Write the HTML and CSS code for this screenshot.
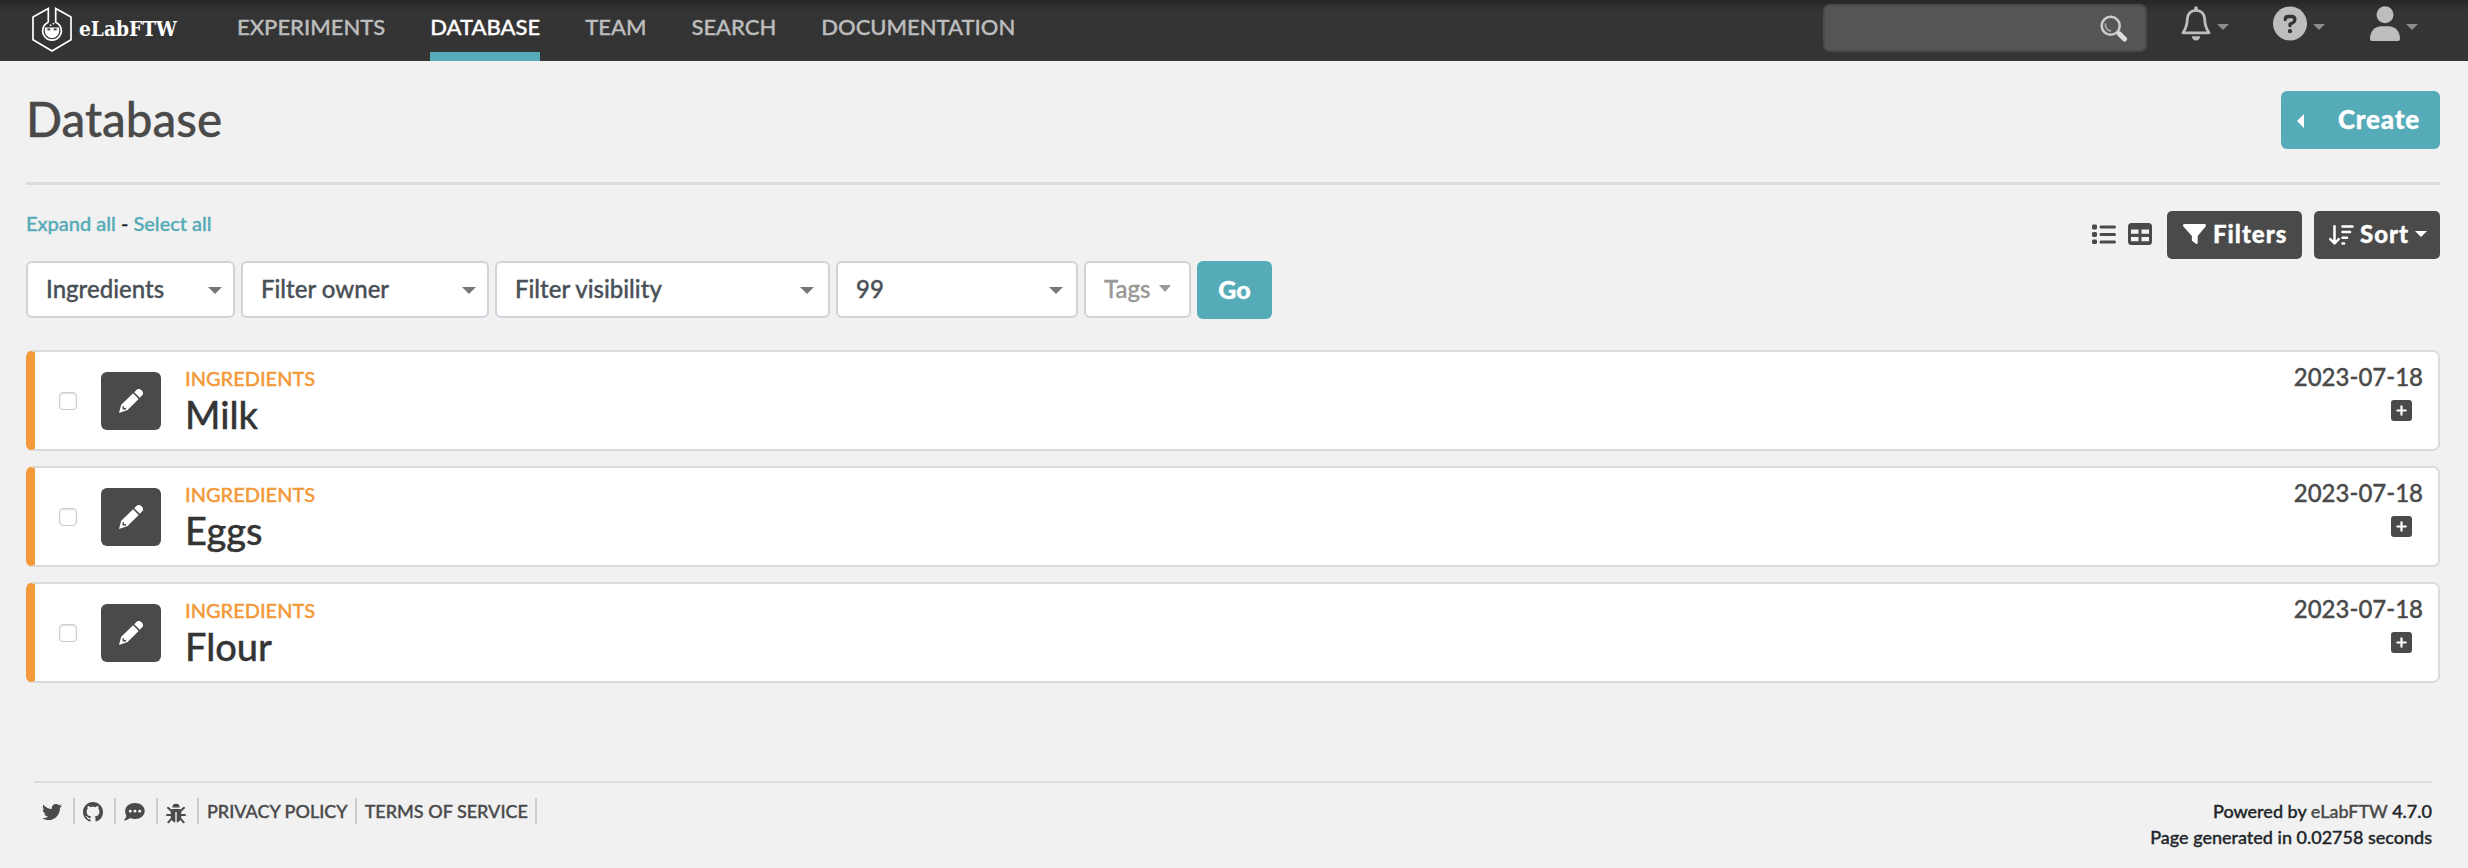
FILE: index.html
```html
<!DOCTYPE html>
<html lang="en">
<head>
<meta charset="utf-8">
<title>Database - eLabFTW</title>
<link rel="stylesheet" href="styles.css">
</head>
<body>
<svg class="defs" aria-hidden="true">
  <symbol id="pencil" viewBox="0 0 24 24">
    <path fill="#fff" d="M15.200 3.200 17.400 1a3.400 3.400 0 0 1 4.800 0l.8.8a3.400 3.400 0 0 1 0 4.800L20.800 8.800ZM14.100 4.300 19.700 9.900 8.600 21 0 24l2.200-8.200Z"/>
    <path fill="none" stroke="#4a4a4a" stroke-width="1.500" d="M4.300 17.300v2.500h2.800"/>
  </symbol>
  <symbol id="plus" viewBox="0 0 21 21">
    <rect width="21" height="21" rx="3" fill="#4a4a4a"/>
    <path stroke="#fff" stroke-width="2.200" stroke-linecap="round" d="M10.500 6.300v8.400M6.300 10.500h8.400"/>
  </symbol>
</svg>
<header class="navbar">
  <a class="brand">
    <svg class="logo" width="40" height="46" viewBox="0 0 40 46" fill="none">
      <path stroke="#fff" stroke-width="1.700" d="M16.300 16.200V2.400L1 11v22.800L20 45l19-11.200V11L23.700 2.400v13.800a9.300 9.300 0 1 1-7.400 0"/>
      <path fill="#fff" d="M12.800 21.500h14.400v3.500a7.200 7.200 0 0 1-14.400 0Z"/>
      <circle cx="18.600" cy="19.200" r=".9" fill="#fff"/><circle cx="21.400" cy="17.600" r=".9" fill="#fff"/>
      <path fill="#333" d="M15.300 22.500h3v1.700h-3zM21.700 22.500h3v1.700h-3z"/>
    </svg>
    <svg class="wordmark" width="100" height="30" viewBox="0 0 100 30"><text x="0" y="22" textLength="98" lengthAdjust="spacingAndGlyphs">eLabFTW</text></svg>
  </a>
  <nav class="menu">
    <a>EXPERIMENTS</a><a class="active">DATABASE</a><a>TEAM</a><a>SEARCH</a><a>DOCUMENTATION</a>
  </nav>
  <div class="search">
    <svg width="28" height="28" viewBox="0 0 28 28" fill="none"><circle cx="10.700" cy="10.700" r="9" stroke="#ccc" stroke-width="2.600"/><path stroke="#aaa" stroke-width="1.800" d="M5.500 8.500c-.8 4 1.500 7 5.500 7.500"/><path stroke="#ddd" stroke-width="5" stroke-linecap="round" d="m19.500 19 5 5"/></svg>
  </div>
  <div class="tools">
    <a class="tool bell"><svg width="30" height="35" viewBox="0 0 30 35"><path fill="none" stroke="#bdbdbd" stroke-width="2.800" stroke-linejoin="round" d="M15 4.300c-5 0-8.700 3.700-8.700 8.900 0 6.500-1.700 9.500-4.300 13.600h26c-2.600-4.100-4.300-7.100-4.300-13.600 0-5.200-3.700-8.900-8.700-8.900Z"/><path stroke="#bdbdbd" stroke-width="3.600" stroke-linecap="round" d="M15 2v2"/><path fill="#bdbdbd" d="M10.800 30.300h8.400a4.200 4.200 0 0 1-8.400 0Z"/></svg><i class="caret"></i></a>
    <a class="tool help"><svg width="34" height="35" viewBox="0 0 34 34"><circle cx="17" cy="17" r="17" fill="#bdbdbd"/><path fill="none" stroke="#343434" stroke-width="3.300" stroke-linecap="round" stroke-linejoin="round" d="M12.300 13c0-2 1.200-3 3-3h3.200c2 0 3.400 1.300 3.400 3.100 0 1.500-.7 2.300-1.800 3L17 17.800v1.400"/><circle cx="17" cy="24.600" r="2.200" fill="#343434"/></svg><i class="caret"></i></a>
    <a class="tool user"><svg width="30" height="35" viewBox="0 0 30 35"><circle cx="15" cy="8.700" r="8.500" fill="#bdbdbd"/><path fill="#bdbdbd" d="M0 33c0-8 4.700-12.800 11.500-12.800h7c6.800 0 11.500 4.800 11.500 12.800 0 1.200-.8 2-2 2H2c-1.200 0-2-.8-2-2Z"/></svg><i class="caret"></i></a>
  </div>
</header>
<main>
  <div class="title-bar">
    <h1>Database</h1>
    <button class="create"><i class="left"></i><span>Create</span></button>
  </div>
  <div class="controls">
    <div>
      <p class="links"><a>Expand all</a> - <a>Select all</a></p>
      <div class="filters">
        <div class="select category">Ingredients<i class="caret"></i></div>
        <div class="select owner">Filter owner<i class="caret"></i></div>
        <div class="select visibility">Filter visibility<i class="caret"></i></div>
        <div class="select limit">99<i class="caret"></i></div>
        <div class="select tags">Tags<i class="caret"></i></div>
        <button class="go">Go</button>
      </div>
    </div>
    <div class="view">
      <svg width="24" height="20" viewBox="0 0 24 20"><path stroke="#4a4a4a" stroke-width="3" stroke-linecap="round" d="M9 3h13.500M9 10.500h13.500M9 18h13.500"/><path fill="#4a4a4a" d="M0 1.500 1 .5h3l1 1v3l-1 1H1l-1-1zM0 9l1-1h3l1 1v3l-1 1H1l-1-1zM0 16.500l1-1h3l1 1v2.500l-1 1H1l-1-1z"/></svg>
      <svg class="grid" width="24" height="22" viewBox="0 0 24 22"><rect width="24" height="22" rx="3.500" fill="#4a4a4a"/><path fill="#f1f1f1" d="M3 6.500h7.500v4.300H3zM13.500 6.500H21v4.300h-7.500zM3 14h7.500v4.300H3zM13.500 14H21v4.300h-7.500z"/></svg>
      <button class="dark filter"><svg width="23" height="20" viewBox="0 0 23 20"><path fill="#fff" d="M1.500 0h20c1.300 0 1.900 1.400 1.100 2.400L14.700 12v6.800c0 1-1 1.500-1.800.9l-3.300-2.400c-.5-.4-.7-.8-.7-1.300v-4L.4 2.400C-.4 1.400.2 0 1.500 0Z"/></svg>Filters</button>
      <button class="dark sort"><svg width="25" height="20" viewBox="0 0 25 20" fill="none" stroke="#fff" stroke-width="2.500" stroke-linecap="round" stroke-linejoin="round"><path d="M5.500 1.300v17M1.300 14.200l4.200 4.300 4.200-4.300M13.500 1.500h10M13.500 7h7.500M13.500 12.700H18M13.500 18.400h1.600"/></svg>Sort<i class="caret"></i></button>
    </div>
  </div>
  <section class="items">
    <article class="item">
      <span class="check"></span><button class="edit"><svg width="24" height="24"><use href="#pencil"/></svg></button>
      <div class="info"><p class="kind">INGREDIENTS</p><h2>Milk</h2></div>
      <div class="meta"><time>2023-07-18</time><svg width="21" height="21"><use href="#plus"/></svg></div>
    </article>
    <article class="item">
      <span class="check"></span><button class="edit"><svg width="24" height="24"><use href="#pencil"/></svg></button>
      <div class="info"><p class="kind">INGREDIENTS</p><h2>Eggs</h2></div>
      <div class="meta"><time>2023-07-18</time><svg width="21" height="21"><use href="#plus"/></svg></div>
    </article>
    <article class="item">
      <span class="check"></span><button class="edit"><svg width="24" height="24"><use href="#pencil"/></svg></button>
      <div class="info"><p class="kind">INGREDIENTS</p><h2>Flour</h2></div>
      <div class="meta"><time>2023-07-18</time><svg width="21" height="21"><use href="#plus"/></svg></div>
    </article>
  </section>
</main>
<footer>
  <ul>
    <li class="icon first"><svg width="20" height="20" viewBox="0 0 512 512"><path fill="#4a4a4a" d="M459.370 151.716c.325 4.548.325 9.097.325 13.645 0 138.720-105.583 298.558-298.558 298.558-59.452 0-114.680-17.219-161.137-47.106 8.447.974 16.568 1.299 25.340 1.299 49.055 0 94.213-16.568 130.274-44.832-46.132-.975-84.792-31.188-98.112-72.772 6.498.974 12.995 1.624 19.818 1.624 9.421 0 18.843-1.300 27.614-3.573-48.081-9.747-84.143-51.980-84.143-102.985v-1.299c13.969 7.797 30.214 12.670 47.431 13.319-28.264-18.843-46.781-51.005-46.781-87.391 0-19.492 5.197-37.360 14.294-52.954 51.655 63.675 129.300 105.258 216.365 109.807-1.624-7.797-2.599-15.918-2.599-24.040 0-57.828 46.782-104.934 104.934-104.934 30.213 0 57.502 12.670 76.670 33.137 23.715-4.548 46.456-13.320 66.599-25.340-7.798 24.366-24.366 44.833-46.132 57.827 21.117-2.273 41.584-8.122 60.426-16.243-14.292 20.791-32.161 39.308-52.628 54.253z"/></svg></li>
    <li class="icon"><svg width="20" height="20" viewBox="0 0 16 16"><path fill="#4a4a4a" d="M8 0C3.580 0 0 3.580 0 8c0 3.540 2.290 6.530 5.470 7.590.4.070.55-.17.55-.38 0-.19-.01-.82-.01-1.490-2.010.37-2.530-.49-2.690-.94-.09-.23-.48-.94-.82-1.130-.28-.15-.68-.52-.01-.53.63-.01 1.080.58 1.230.82.72 1.210 1.870.87 2.330.66.070-.52.280-.87.510-1.070-1.780-.2-3.640-.89-3.640-3.950 0-.87.310-1.590.820-2.150-.08-.2-.36-1.020.080-2.120 0 0 .67-.21 2.200.820.640-.18 1.320-.27 2-.27s1.360.090 2 .27c1.530-1.040 2.200-.82 2.200-.82.440 1.100.160 1.920.080 2.120.510.560.820 1.270.820 2.150 0 3.070-1.870 3.750-3.650 3.950.290.250.540.730.540 1.480 0 1.070-.01 1.930-.01 2.200 0 .210.150.460.550.380A8.010 8.010 0 0 0 16 8c0-4.420-3.580-8-8-8z"/></svg></li>
    <li class="icon"><svg width="21" height="20" viewBox="0 0 21 20"><path fill="#4a4a4a" d="M11 1c5.500 0 9.700 3.500 9.700 8s-4.200 8-9.700 8c-1.700 0-3.300-.3-4.700-.9C4.700 17.200 2.700 18.500.4 18.500c-.4 0-.5-.5-.2-.8 1-1.100 1.900-2.300 2.200-3.900A7.300 7.300 0 0 1 1.200 9C1.200 4.500 5.500 1 11 1Z"/><g fill="#fff"><circle cx="6.300" cy="9.200" r="1.350"/><circle cx="11" cy="9.200" r="1.350"/><circle cx="15.700" cy="9.200" r="1.350"/></g></svg></li>
    <li class="icon"><svg width="20" height="22" viewBox="0 0 20 22"><path fill="#4a4a4a" d="M6.300 5.500a3.700 3.700 0 0 1 7.400 0ZM6 7h3.300v13.400C6.600 20 4.800 17.800 4.800 15V8.500ZM10.700 7H14l1.200 1.500V15c0 2.800-1.800 5-4.500 5.400ZM9.300 7h1.400v3H9.300Z"/><path fill="none" stroke="#4a4a4a" stroke-width="2" stroke-linecap="round" d="M5.500 9 2 5.800M5 13H1M5.500 16.700 2.300 20.300M14.500 9 18 5.800M15 13h4M14.500 16.700l3.200 3.600"/></svg></li>
    <li>PRIVACY POLICY</li><li>TERMS OF SERVICE</li>
  </ul>
  <div class="credits"><p>Powered by <a>eLabFTW</a> 4.7.0</p><p>Page generated in 0.02758 seconds</p></div>
</footer>
</body>
</html>
```
FILE: styles.css
```css
* { box-sizing: border-box; }
body { margin: 0; background: #f1f1f1; color: #212529; font: 500 24px/30px Lato, "Open Sans", sans-serif; height: 868px; overflow: hidden; -webkit-text-stroke: .35px; }
p, h1, h2, ul { margin: 0; padding: 0; font-weight: 500; }
button { border: 0; padding: 0; font: inherit; color: #fff; display: flex; align-items: center; }
svg { display: block; flex: none; }
.defs { display: none; }
.caret { width: 0; height: 0; border: 6px solid transparent; border-top-color: currentColor; border-bottom: 0; }

.navbar { height: 61px; padding-left: 32px; display: flex; align-items: flex-start; background: linear-gradient(#272727, #343434 12px); }
.brand { display: flex; width: 205px; }
.logo { margin-top: 6px; }
.wordmark { margin: 14px 0 0 7px; overflow: visible; }
.wordmark text { fill: #fff; font: bold 21px "DejaVu Serif", serif; }
.menu { display: flex; gap: 45px; flex: 1; font-size: 22px; color: #bdbdbd; }
.menu a { height: 61px; padding-top: 12px; border-bottom: 9px solid transparent; }
.menu .active { color: #fff; border-color: #55abb7; }
.search { width: 324px; height: 48px; margin-top: 4px; padding: 9px 17px; display: flex; justify-content: flex-end; background: #555; border: 2px solid #4a4a4a; border-radius: 7px; }
.tools { display: flex; padding: 6px 50px 0 34px; color: #8c8c8c; }
.tool { display: flex; }
.tool .caret { margin: 18px 0 0 6px; }
.help { margin-left: 44px; }
.user { margin-left: 45px; }

main { padding: 0 28px 0 26px; }
.title-bar { height: 124px; display: flex; justify-content: space-between; border-bottom: 3px solid #dbdbdb; }
h1 { font-size: 47.500px; line-height: 58px; padding-top: 29px; color: #4a4a4a; }
.create { width: 159px; height: 58px; margin-top: 30px; padding: 0 20px 3px 16px; justify-content: space-between; border-radius: 6px; background: #55abb7; font-size: 26px; font-weight: 900; letter-spacing: .8px; }
.left { width: 0; height: 0; border: 7px solid transparent; border-right-color: #fff; border-left: 0; margin-top: 4px; }
.controls { display: flex; justify-content: space-between; }
.links { font-size: 20px; padding-top: 23px; margin-bottom: 23px; }
.links a { color: #55abb7; }
.filters { display: flex; gap: 6px; }
.select { height: 57px; padding: 0 11px 2px 18px; display: flex; align-items: center; justify-content: space-between; background: #fff; border: 2px solid #ced4da; border-radius: 6px; color: #495057; }
.select .caret { border-width: 7px 7px 0; color: #777; margin-top: 4px; }
.category { width: 209px; }
.owner { width: 248px; }
.visibility { width: 335px; padding-right: 14px; }
.limit { width: 242px; padding-right: 13px; }
.tags { width: 107px; padding-right: 18px; color: #999; }
.tags .caret { color: #999; margin-top: 0; border-width: 7px 6px 0; }
.go { width: 75px; height: 58px; padding-bottom: 2px; justify-content: center; border-radius: 6px; background: #55abb7; font-weight: 900; font-size: 25px; }
.view { display: flex; padding-top: 26px; }
.view > svg { margin-top: 13px; }
.view .grid { margin: 12px 15px 0 12px; }
.dark { height: 48px; border-radius: 5px; background: #4a4a4a; font-weight: 900; letter-spacing: 1px; padding-bottom: 2px; }
.filter { width: 135px; padding-left: 16px; gap: 7px; margin-right: 12px; }
.sort { width: 126px; padding-left: 15px; gap: 6px; }
.sort svg { margin-top: 1px; }

.items { display: grid; gap: 15px; margin-top: 31px; }
.item { height: 101px; padding-left: 24px; display: flex; background: #fff; border: 2px solid #dbdbdb; border-left: 9px solid #f39939; border-radius: 7px; }
.check { width: 18px; height: 18px; margin: 40px 24px 0 0; border: 1.500px solid #ccc; border-radius: 4px; box-shadow: inset 0 1px 2px #ddd; }
.edit { width: 60px; height: 58px; margin: 20px 24px 0 0; justify-content: center; border-radius: 6px; background: #4a4a4a; }
.info { flex: 1; padding-top: 13px; }
.kind { font-size: 20px; line-height: 26px; color: #f39939; }
h2 { font-size: 38px; line-height: 47px; color: #343434; }
.meta { padding: 10px 15px 0 0; color: #4a4a4a; }
.meta svg { margin: 8px 11px 0 auto; }

footer { margin: 98px 36px 0 34px; padding-top: 15px; border-top: 2px solid #dbdbdb; display: flex; justify-content: space-between; font-size: 18px; line-height: 26px; color: #212529; }
footer ul { display: flex; list-style: none; color: #4a4a4a; }
li { height: 26px; padding: 0 7px 0 8px; border-right: 2px solid #ccc; }
.icon { width: 41.300px; padding-top: 4px; }
.first { width: 41px; }
.credits { text-align: right; }
.credits a { color: #4a4a4a; }
```
